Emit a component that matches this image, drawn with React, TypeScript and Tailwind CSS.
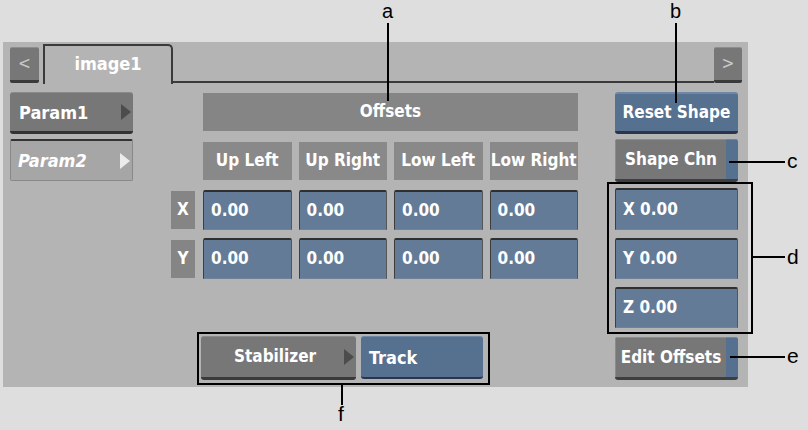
import React from "react";

const ui = { fontFamily: '"DejaVu Sans Condensed", "DejaVu Sans", sans-serif' };
const ann = { fontFamily: '"Liberation Sans", Arial, sans-serif' };

function TriRight({ color }: { color: string }) {
  return (
    <svg width="10" height="16" viewBox="0 0 10 16" className="shrink-0">
      <polygon points="0,0 10,8 0,16" fill={color} />
    </svg>
  );
}

function Field({ text }: { text: string }) {
  return (
    <div className="h-full flex items-center pl-[7px] bg-[#637b96] border-t-2 border-t-[#2f2f2f] border-l border-l-[#3e3e3e] border-r border-r-[#555] border-b border-b-[#6f8298] rounded-t-[2px] text-white text-[17px] font-bold">
      {text}
    </div>
  );
}

function Header({ text }: { text: string }) {
  return (
    <div className="h-full flex items-center justify-center bg-[#898989] text-white text-[17px] font-bold">
      {text}
    </div>
  );
}

function StripButton({ text }: { text: string }) {
  return (
    <div className="w-[123px] h-[43px] flex rounded-[3px] overflow-hidden border-b-[3px] border-b-[#3e3e3e]">
      <div className="flex-1 flex items-center justify-center bg-[#777] border-t border-t-[#8c8c8c] border-l border-l-[#8a8a8a] text-white text-[17px] font-bold">
        {text}
      </div>
      <div className="w-[12px] bg-[#56708f] border-t border-t-[#6e86a3]" />
    </div>
  );
}

export default function App() {
  return (
    <div className="relative w-[808px] h-[430px] bg-[#dedede] pt-[42px] pl-[3px]" style={ui}>
      <div className="w-[745px] h-[345px] bg-[#b4b4b4] flex flex-col">
        {/* tab row */}
        <div className="h-[42px] flex items-end">
          <div className="ml-[7px] mb-[1px] w-[29px] h-[36px] flex items-center justify-center bg-[#777] border-b-[3px] border-b-[#3a3a3a] border-t border-t-[#8e8e8e] rounded-[2px] text-[#c8c8c8] text-[17px]">
            &lt;
          </div>
          <div className="ml-[4px] w-[130px] h-[40px] border-l-2 border-t-2 border-r-2 border-[#3a3a3a] rounded-tr-[5px] flex items-center justify-center text-white text-[18px] font-bold pb-[3px]">
            image1
          </div>
          <div className="flex-1 h-[2px] bg-[#3a3a3a] mb-[1px]" />
          <div className="mr-[6px] mb-[1px] w-[28px] h-[36px] flex items-center justify-center bg-[#777] border-b-[3px] border-b-[#3a3a3a] border-t border-t-[#8e8e8e] rounded-[2px] text-[#c8c8c8] text-[17px]">
            &gt;
          </div>
        </div>

        {/* content */}
        <div className="flex mt-[8px]">
          {/* left column */}
          <div className="ml-[7px] w-[123px] flex flex-col">
            <div className="h-[42px] flex items-center justify-between pl-[9px] pr-[2px] bg-[#777] border-b-[3px] border-b-[#333] border-t border-t-[#8a8a8a] rounded-[3px] text-white text-[18px] font-bold">
              Param1
              <TriRight color="#4c4c4c" />
            </div>
            <div className="mt-[5px] h-[42px] flex items-center justify-between pl-[7px] pr-[2px] bg-[#a6a6a6] border-t-2 border-t-[#333] border-l border-r border-b border-[#888] rounded-[2px] text-white text-[18px] font-bold italic">
              Param2
              <TriRight color="#ececec" />
            </div>
          </div>

          {/* middle */}
          <div className="ml-[38px] w-[407px] flex flex-col">
            <div className="ml-[32px] mt-[1px] h-[38px] bg-[#858585] flex items-center justify-center text-white text-[17px] font-bold">
              Offsets
            </div>
            <div className="ml-[32px] mt-[11px] h-[38px] grid grid-cols-4 gap-x-[7px]">
              <Header text="Up Left" />
              <Header text="Up Right" />
              <Header text="Low Left" />
              <Header text="Low Right" />
            </div>
            <div className="mt-[10px] h-[40px] flex gap-x-[8px]">
              <div className="w-[24px] h-[38px] mt-[1px] bg-[#858585] flex items-center justify-center text-white text-[17px] font-bold">
                X
              </div>
              <div className="flex-1 grid grid-cols-4 gap-x-[7px]">
                <Field text="0.00" />
                <Field text="0.00" />
                <Field text="0.00" />
                <Field text="0.00" />
              </div>
            </div>
            <div className="mt-[8px] h-[41px] flex gap-x-[8px]">
              <div className="w-[24px] h-[38px] mt-[2px] bg-[#858585] flex items-center justify-center text-white text-[17px] font-bold">
                Y
              </div>
              <div className="flex-1 grid grid-cols-4 gap-x-[7px]">
                <Field text="0.00" />
                <Field text="0.00" />
                <Field text="0.00" />
                <Field text="0.00" />
              </div>
            </div>
            <div className="mt-[57px] ml-[30px] flex gap-x-[5px]">
              <div className="w-[155px] h-[44px] flex items-center bg-[#777] border-b-[3px] border-b-[#3a3a3a] border-t border-t-[#8a8a8a] rounded-[3px] text-white text-[17px] font-bold pl-[33px] pr-[2px]">
                <span className="flex-1">Stabilizer</span>
                <TriRight color="#4c4c4c" />
              </div>
              <div className="w-[122px] h-[43px] flex items-center pl-[8px] bg-[#56708f] border-t border-t-[#7088a4] border-b-2 border-b-[#2b3350] rounded-[3px] text-white text-[18px] font-bold">
                Track
              </div>
            </div>
          </div>

          {/* right column */}
          <div className="ml-[37px] w-[123px] flex flex-col">
            <div className="h-[42px] flex items-center justify-center bg-[#56708f] border-t-2 border-t-[#6f87a4] border-b-[3px] border-b-[#2b3350] rounded-[3px] text-white text-[17px] font-bold">
              Reset Shape
            </div>
            <div className="mt-[5px]">
              <StripButton text="Shape Chn" />
            </div>
            <div className="mt-[6px] h-[42px]">
              <Field text="X 0.00" />
            </div>
            <div className="mt-[8px] h-[41px]">
              <Field text="Y 0.00" />
            </div>
            <div className="mt-[8px] h-[41px]">
              <Field text="Z 0.00" />
            </div>
            <div className="mt-[9px]">
              <StripButton text="Edit Offsets" />
            </div>
          </div>
        </div>
      </div>

      {/* annotation boxes */}
      <div className="absolute left-[607px] top-[182px] w-[146px] h-[152px] border-2 border-black" />
      <div className="absolute left-[197px] top-[332px] w-[293px] h-[53px] border-2 border-black" />

      {/* annotation lines */}
      <div className="absolute left-[387px] top-[23px] w-[2px] h-[78px] bg-black" />
      <div className="absolute left-[675px] top-[23px] w-[2px] h-[80px] bg-black" />
      <div className="absolute left-[729px] top-[161px] w-[56px] h-[2px] bg-black" />
      <div className="absolute left-[753px] top-[256px] w-[32px] h-[2px] bg-black" />
      <div className="absolute left-[730px] top-[356px] w-[55px] h-[2px] bg-black" />
      <div className="absolute left-[341px] top-[385px] w-[2px] h-[20px] bg-black" />

      {/* annotation letters */}
      <div className="absolute left-[382px] top-0 text-[20px] text-black leading-[23px]" style={ann}>a</div>
      <div className="absolute left-[670px] top-0 text-[20px] text-black leading-[23px]" style={ann}>b</div>
      <div className="absolute left-[787px] top-[150px] text-[21px] text-black leading-none" style={ann}>c</div>
      <div className="absolute left-[787px] top-[246px] text-[21px] text-black leading-none" style={ann}>d</div>
      <div className="absolute left-[787px] top-[345px] text-[21px] text-black leading-none" style={ann}>e</div>
      <div className="absolute left-[338px] top-[403px] text-[21px] text-black leading-none" style={ann}>f</div>
    </div>
  );
}
